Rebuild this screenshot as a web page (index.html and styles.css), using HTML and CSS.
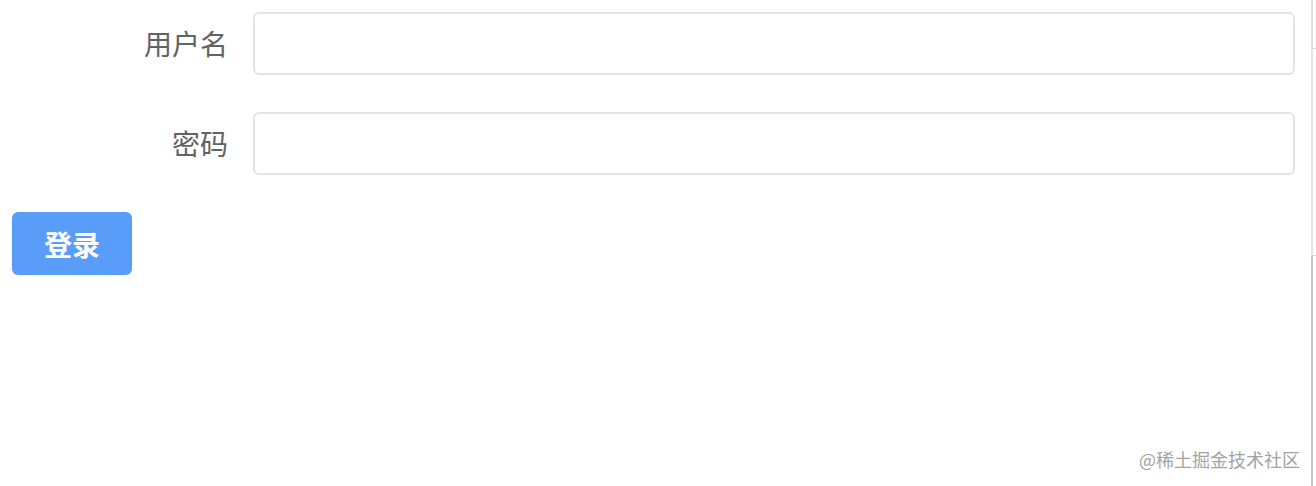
FILE: index.html
```html
<!DOCTYPE html>
<html lang="zh">
<head>
<meta charset="utf-8">
<title>登录</title>
<link rel="stylesheet" href="styles.css">
</head>
<body>
<div class="page">
  <main class="main">
    <form class="form">
      <div class="row">
        <label class="label">用户名</label>
        <div class="control"><input class="input" type="text"></div>
      </div>
      <div class="row">
        <label class="label">密码</label>
        <div class="control"><input class="input" type="password"></div>
      </div>
      <button class="btn" type="button">登录</button>
    </form>
    <div class="watermark">@稀土掘金技术社区</div>
  </main>
  <aside class="side">
    <div class="seg seg-a"></div>
    <div class="seg seg-b"></div>
    <div class="seg seg-c"></div>
  </aside>
</div>
</body>
</html>
```
FILE: styles.css
```css
html, body {
  margin: 0;
  padding: 0;
  background: #ffffff;
  font-family: "Noto Sans CJK SC", "Noto Sans", sans-serif;
}
.page {
  display: flex;
  height: 486px;
  overflow: hidden;
}
.main {
  flex: 1;
  position: relative;
  padding: 12px 16px 0 12px;
}
.form {
  display: flex;
  flex-direction: column;
  align-items: flex-start;
}
.row {
  display: flex;
  align-items: center;
  width: 100%;
  margin-bottom: 37px;
}
.label {
  box-sizing: border-box;
  width: 241px;
  padding-right: 25px;
  text-align: right;
  font-size: 28px;
  color: #606266;
  line-height: 63px;
}
.control {
  flex: 1;
}
.input {
  box-sizing: border-box;
  display: block;
  width: 100%;
  height: 63px;
  border: 2px solid #e2e4e8;
  border-radius: 6px;
  background: #fff;
  outline: none;
  padding: 0 20px;
  font-size: 22px;
}
.btn {
  box-sizing: border-box;
  width: 120px;
  height: 63px;
  border: none;
  border-radius: 6px;
  background: #5a9df8;
  color: #fff;
  font-family: "Noto Sans CJK SC", sans-serif;
  font-size: 28px;
  font-weight: 700;
  cursor: pointer;
  padding: 0;
}
.watermark {
  position: absolute;
  right: 11px;
  bottom: 14px;
  font-size: 18px;
  color: #a3a3a3;
  letter-spacing: 0;
}
.side {
  width: 5px;
  display: flex;
  flex-direction: column;
}
.seg {
  border-left: 2px solid #d4d4d4;
}
.seg-a {
  height: 48px;
  border-left-color: #e0e0e0;
  border-bottom: 1px solid #d4d4d4;
}
.seg-b {
  height: 206px;
  border-left-color: #e4e4e4;
  border-bottom: 1px solid #cfcfcf;
}
.seg-c {
  flex: 1;
  border-left-color: #c8c8c8;
}
```
